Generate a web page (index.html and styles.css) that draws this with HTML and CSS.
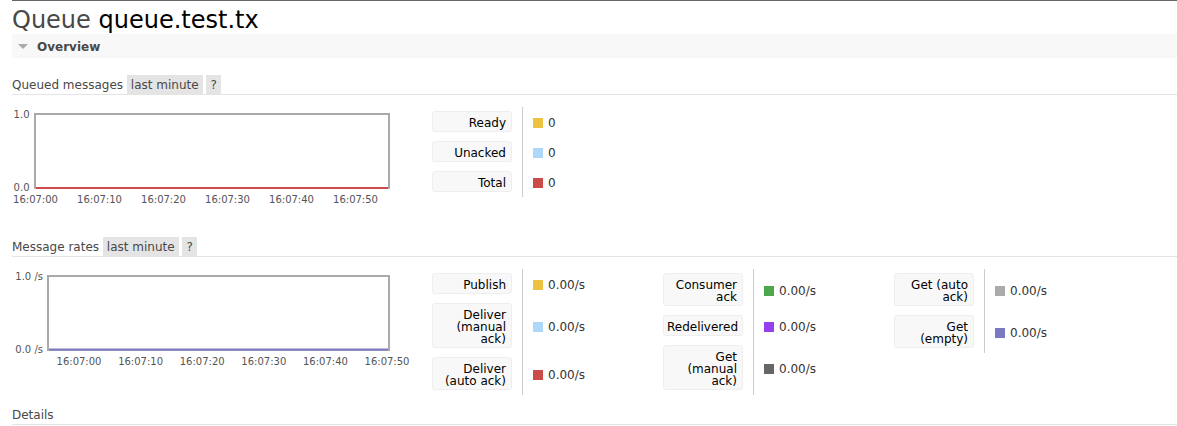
FILE: index.html
```html
<!DOCTYPE html>
<html lang="en">
<head>
    <meta charset="UTF-8">
    <title>Queue queue.test.tx</title>
    <link rel="stylesheet" href="styles.css">
</head>
<body>
    <div id="main">
        <h1>Queue <b>queue.test.tx</b></h1>

        <div class="section">
            <h2 class="section-toggle"><span class="arrow"></span>Overview</h2>
            <div class="section-body">
                <h3 class="chart-title">Queued messages <span class="tag">last minute</span> <span class="tag">?</span></h3>
                <div class="chart-row">
                    <svg class="chart" width="420" height="120" viewBox="0 0 420 120">
                        <rect x="23" y="7" width="354" height="74" fill="#fff" stroke="#aaa" stroke-width="2"/>
                        <line x1="24" y1="81" x2="376" y2="81" stroke="#cb4b4b" stroke-width="2"/>
                        <text x="17.5" y="11.3" text-anchor="end">1.0</text>
                        <text x="17.5" y="83.7" text-anchor="end">0.0</text>
                        <text x="23.5" y="96.3" text-anchor="middle">16:07:00</text>
                        <text x="87.5" y="96.3" text-anchor="middle">16:07:10</text>
                        <text x="151.5" y="96.3" text-anchor="middle">16:07:20</text>
                        <text x="215.5" y="96.3" text-anchor="middle">16:07:30</text>
                        <text x="279.5" y="96.3" text-anchor="middle">16:07:40</text>
                        <text x="343.5" y="96.3" text-anchor="middle">16:07:50</text>
                    </svg>
                    <div class="legend">
                        <div class="legend-col">
                            <div class="legend-key"><span>Ready</span></div>
                            <div class="legend-value"><i class="swatch" style="background-color: #edc240;"></i>0</div>
                            <div class="legend-key"><span>Unacked</span></div>
                            <div class="legend-value"><i class="swatch" style="background-color: #afd8f8;"></i>0</div>
                            <div class="legend-key"><span>Total</span></div>
                            <div class="legend-value"><i class="swatch" style="background-color: #cb4b4b;"></i>0</div>
                        </div>
                    </div>
                </div>

                <h3 class="chart-title">Message rates <span class="tag">last minute</span> <span class="tag">?</span></h3>
                <div class="chart-row">
                    <svg class="chart" width="420" height="100" viewBox="0 0 420 100">
                        <rect x="36" y="7" width="341" height="74" fill="#fff" stroke="#aaa" stroke-width="2"/>
                        <line x1="37" y1="80.5" x2="376" y2="80.5" stroke="#7c79c3" stroke-width="2"/>
                        <text x="31" y="11" text-anchor="end">1.0 /s</text>
                        <text x="31" y="84.3" text-anchor="end">0.0 /s</text>
                        <text x="67" y="96" text-anchor="middle">16:07:00</text>
                        <text x="128.6" y="96" text-anchor="middle">16:07:10</text>
                        <text x="190.2" y="96" text-anchor="middle">16:07:20</text>
                        <text x="251.8" y="96" text-anchor="middle">16:07:30</text>
                        <text x="313.4" y="96" text-anchor="middle">16:07:40</text>
                        <text x="375" y="96" text-anchor="middle">16:07:50</text>
                    </svg>
                    <div class="legend">
                        <div class="legend-col">
                            <div class="legend-key"><span>Publish</span></div>
                            <div class="legend-value"><i class="swatch" style="background-color: #edc240;"></i>0.00/s</div>
                            <div class="legend-key"><span>Deliver (manual ack)</span></div>
                            <div class="legend-value"><i class="swatch" style="background-color: #afd8f8;"></i>0.00/s</div>
                            <div class="legend-key"><span>Deliver (auto ack)</span></div>
                            <div class="legend-value"><i class="swatch" style="background-color: #cb4b4b;"></i>0.00/s</div>
                        </div>
                        <div class="legend-col">
                            <div class="legend-key"><span>Consumer ack</span></div>
                            <div class="legend-value"><i class="swatch" style="background-color: #4da74d;"></i>0.00/s</div>
                            <div class="legend-key"><span>Redelivered</span></div>
                            <div class="legend-value"><i class="swatch" style="background-color: #9440ed;"></i>0.00/s</div>
                            <div class="legend-key"><span>Get (manual ack)</span></div>
                            <div class="legend-value"><i class="swatch" style="background-color: #666;"></i>0.00/s</div>
                        </div>
                        <div class="legend-col">
                            <div class="legend-key"><span>Get (auto ack)</span></div>
                            <div class="legend-value"><i class="swatch" style="background-color: #aaa;"></i>0.00/s</div>
                            <div class="legend-key"><span>Get (empty)</span></div>
                            <div class="legend-value"><i class="swatch" style="background-color: #7c79c3;"></i>0.00/s</div>
                        </div>
                    </div>
                </div>

                <h3 class="chart-title">Details</h3>
            </div>
        </div>
    </div>
</body>
</html>
```

FILE: styles.css
```css
body {
    margin: 0;
    padding: 0;
    background-color: #fff;
    color: #484848;
    font-family: "DejaVu Sans", Verdana, sans-serif;
    font-size: 12px;
}

#main {
    margin-left: 12px;
    border-top: 1px solid #666;
}

h1 {
    margin: 7px 0 2px;
    font-size: 24px;
    font-weight: normal;
    line-height: 24px;
    color: #484848;
}

h1 b {
    font-weight: normal;
    color: #000;
}

.section-toggle {
    margin: 0;
    height: 24px;
    line-height: 26px;
    padding-left: 6px;
    background-color: #f8f8f8;
    font-size: 12px;
    font-weight: bold;
    color: #484848;
}

.section-toggle .arrow {
    display: inline-block;
    width: 0;
    height: 0;
    border-left: 5px solid transparent;
    border-right: 5px solid transparent;
    border-top: 5px solid #aaa;
    margin-right: 9px;
    vertical-align: 2px;
}

.section-body {
    padding-top: 17px;
}

.chart-title {
    margin: 0;
    height: 19px;
    font-size: 12px;
    font-weight: normal;
    line-height: 21px;
    border-bottom: 1px solid #e4e4e4;
}

.tag {
    display: inline-block;
    vertical-align: top;
    padding: 1px 4px 0;
    line-height: 18px;
    background-color: #e4e4e4;
}

.chart-row {
    display: flex;
    margin: 12px 0 10px;
}

.chart {
    flex: none;
    overflow: visible;
}

.chart text {
    font-family: "DejaVu Sans", Verdana, sans-serif;
    font-size: 10px;
    fill: #545454;
}

.legend {
    display: flex;
    align-items: flex-start;
}

.legend-col {
    display: grid;
    grid-template-columns: 90px 141px;
}

.legend-key {
    padding: 4px 10px 5px 0;
}

.legend-key span {
    display: block;
    width: 80px;
    box-sizing: border-box;
    padding: 5px 5px 2px 3px;
    line-height: 12px;
    background-color: #f8f8f8;
    border: 1px solid #eee;
    border-radius: 3px;
    text-align: right;
    color: #000;
}

.legend-value {
    display: flex;
    align-items: center;
    border-left: 1px solid #ccc;
    padding: 1px 0 0 10px;
    color: #333;
}

.swatch {
    display: inline-block;
    width: 10px;
    height: 10px;
    margin-right: 5px;
}
```
